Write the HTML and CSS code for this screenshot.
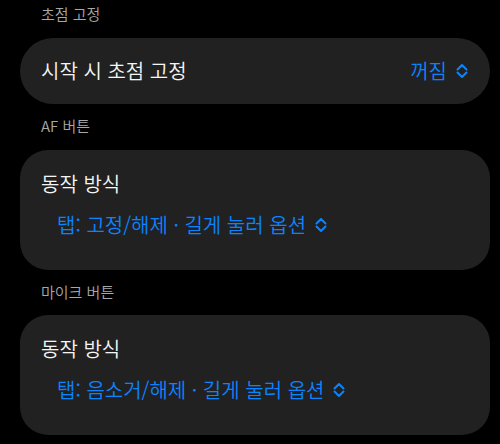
FILE: index.html
```html
<!DOCTYPE html>
<html lang="ko">
<head>
    <meta charset="UTF-8">
    <meta name="viewport" content="width=device-width, initial-scale=1.0">
    <title>카메라 설정</title>
    <link rel="stylesheet" href="styles.css">
</head>
<body>
    <div class="settings">
        <!-- 초점 고정 -->
        <p class="section-label first">초점 고정</p>
        <div class="row-card">
            <span class="row-title">시작 시 초점 고정</span>
            <span class="picker">꺼짐
                <svg class="updown" viewBox="0 0 12 16"><path d="M1.5 6.5 L6 2 L10.5 6.5 M1.5 9.5 L6 14 L10.5 9.5"/></svg>
            </span>
        </div>

        <!-- AF 버튼 -->
        <p class="section-label">AF 버튼</p>
        <div class="block-card">
            <div class="row-title">동작 방식</div>
            <div class="picker option">탭: 고정/해제 · 길게 눌러 옵션
                <svg class="updown" viewBox="0 0 12 16"><path d="M1.5 6.5 L6 2 L10.5 6.5 M1.5 9.5 L6 14 L10.5 9.5"/></svg>
            </div>
        </div>

        <!-- 마이크 버튼 -->
        <p class="section-label">마이크 버튼</p>
        <div class="block-card">
            <div class="row-title">동작 방식</div>
            <div class="picker option">탭: 음소거/해제 · 길게 눌러 옵션
                <svg class="updown" viewBox="0 0 12 16"><path d="M1.5 6.5 L6 2 L10.5 6.5 M1.5 9.5 L6 14 L10.5 9.5"/></svg>
            </div>
        </div>
    </div>
</body>
</html>
```

FILE: styles.css
```css
body {
    margin: 0;
    padding: 0;
    background-color: #000;
    font-family: "Noto Sans CJK KR", "Noto Sans", sans-serif;
}

.settings {
    padding: 0 10px 0 20px;
}

.section-label {
    margin: 12px 0 13.5px;
    padding-left: 21px;
    height: 20px;
    line-height: 20px;
    font-size: 15px;
    font-weight: 350;
    color: #a8a8a8;
}

.section-label.first {
    margin-top: 4px;
    margin-bottom: 14px;
}

.row-card {
    height: 66px;
    border-radius: 33px;
    background-color: #212121;
    padding: 0 22px 0 21px;
    display: flex;
    align-items: center;
    justify-content: space-between;
}

.block-card {
    height: 120px;
    box-sizing: border-box;
    border-radius: 28px;
    background-color: #212121;
    padding: 22px 21px 0;
}

.row-title {
    font-size: 20px;
    font-weight: 350;
    line-height: 24px;
    color: #f5f5f5;
}

.picker {
    display: flex;
    align-items: center;
    gap: 9px;
    font-size: 20px;
    font-weight: 350;
    line-height: 24px;
    color: #0a84ff;
}

.option {
    margin-top: 17px;
    padding-left: 16px;
}

.updown {
    width: 12px;
    height: 16px;
    fill: none;
    stroke: #0a84ff;
    stroke-width: 2;
    stroke-linecap: round;
    stroke-linejoin: round;
}
```
